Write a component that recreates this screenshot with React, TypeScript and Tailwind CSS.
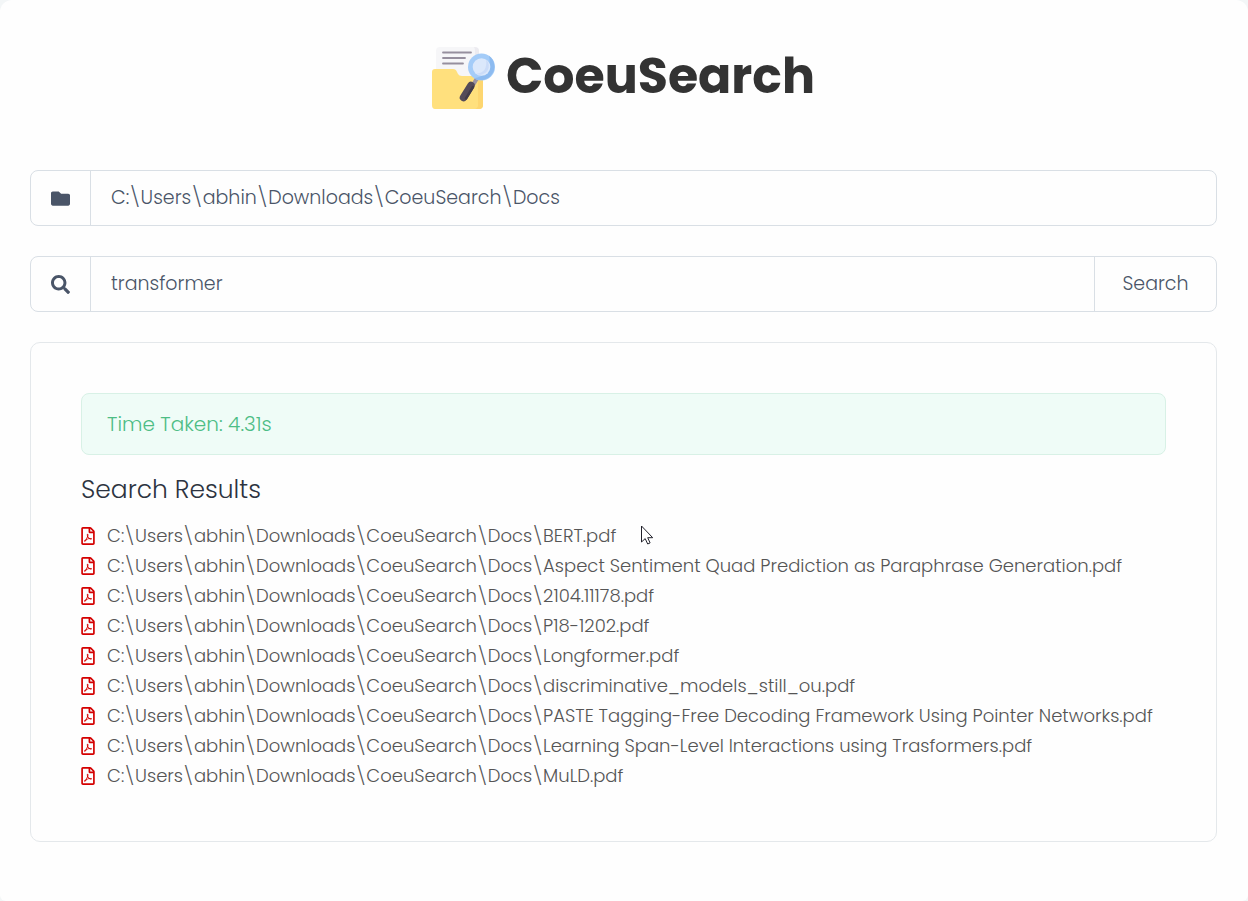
import { useState } from "react";
import { FaFolder, FaRegFilePdf, FaSearch } from "react-icons/fa";

const ROOT = "C:\\Users\\abhin\\Downloads\\CoeuSearch\\Docs";

const FILES = [
  "BERT.pdf",
  "Aspect Sentiment Quad Prediction as Paraphrase Generation.pdf",
  "2104.11178.pdf",
  "P18-1202.pdf",
  "Longformer.pdf",
  "discriminative_models_still_ou.pdf",
  "PASTE Tagging-Free Decoding Framework Using Pointer Networks.pdf",
  "Learning Span-Level Interactions using Trasformers.pdf",
  "MuLD.pdf",
];

function Logo() {
  return (
    <svg className="h-16 w-16 shrink-0" viewBox="0 0 64 64" aria-hidden="true">
      <path d="M8 1h35q4 0 4 4v36H4V5q0-4 4-4z" fill="#f6f6f8" />
      <path d="M42 1q5 0 5 4v36h-4V5q0-3-1-4z" fill="#ecebf0" />
      <g stroke="#968f9e" strokeWidth="1.8" strokeLinecap="round">
        <path d="M11 6.500h28M11 12h22M11 17.500h20" />
      </g>
      <path d="M3 23h18q3 0 4 3l1 2q1 2 4 2h17q4 0 4 4v25q0 4-4 4H3q-3 0-3-4V26q0-3 3-3z" fill="#ffe07d" />
      <path d="M45 30h2q4 0 4 4v25q0 4-4 4h-4q3-1 3-4V34q0-3-1-4z" fill="#fdd670" />
      <path d="M39.500 37.500l4-6.500 3.500 2-4 6.500z" fill="#9c94a3" />
      <path d="M39 39.500L31.500 51.500" stroke="#544b58" strokeWidth="7.500" strokeLinecap="round" />
      <path d="M41 41L34 52.500" stroke="#423b48" strokeWidth="2.500" strokeLinecap="round" />
      <circle cx="49.500" cy="21" r="13.500" fill="#a4ccf8" />
      <path d="M57 9.800a13.500 13.500 0 0 1-15 22.400Q61 29 57 9.800z" fill="#8dbbf0" />
      <circle cx="49.500" cy="21" r="8.800" fill="#dbe8fb" />
      <path d="M54 13.500a8.800 8.800 0 0 1-10 14.300q12-1 10-14.300z" fill="#cbdcf8" />
    </svg>
  );
}

function Pointer() {
  return (
    <svg className="pointer-events-none absolute top-1 left-full ml-6 h-5 w-4" viewBox="0 0 16 20" aria-hidden="true">
      <path
        d="M1.500 1v16l3.700-3.400 2.500 5.400 2.400-1.100-2.400-5.200h5z"
        fill="#fff"
        stroke="#20202a"
        strokeWidth="1"
      />
    </svg>
  );
}

export default function App() {
  const [folder, setFolder] = useState(ROOT);
  const [query, setQuery] = useState("transformer");

  return (
    <div className="min-h-screen bg-[#f3f6f7] font-[Poppins,Inter,'Liberation_Sans',sans-serif]">
      <main className="min-h-screen rounded-t-xl rounded-b-md bg-[#fefefe] pr-[31px] pl-[30px] pt-[46px] pb-[59px]">
        <header className="flex h-16 items-center justify-center gap-[10px]">
          <Logo />
          <h1 className="pb-1 text-[49px] leading-[60px] font-bold text-[#333333]">CoeuSearch</h1>
        </header>

        <form className="mt-[60px] flex flex-col gap-[30px] text-[19px] text-[#4a5568]" onSubmit={(e) => e.preventDefault()}>
          <div className="flex h-14 overflow-hidden rounded-lg border border-[#d9dfe5]">
            <label htmlFor="folder" aria-label="Folder" className="flex w-[60px] shrink-0 items-center justify-center border-r border-[#d9dfe5]">
              <FaFolder className="size-[19px]" />
            </label>
            <input
              id="folder"
              className="min-w-0 flex-1 bg-transparent px-5 font-light outline-none"
              value={folder}
              onChange={(e) => setFolder(e.target.value)}
            />
          </div>
          <div className="flex h-14 overflow-hidden rounded-lg border border-[#d9dfe5]">
            <label htmlFor="query" aria-label="Query" className="flex w-[60px] shrink-0 items-center justify-center border-r border-[#d9dfe5]">
              <FaSearch className="size-[19px]" />
            </label>
            <input
              id="query"
              className="min-w-0 flex-1 bg-transparent px-5 font-light outline-none"
              value={query}
              onChange={(e) => setQuery(e.target.value)}
            />
            <button type="submit" className="w-[122px] shrink-0 border-l border-[#d9dfe5] font-light">
              Search
            </button>
          </div>
        </form>

        <section className="mt-[30px] rounded-[10px] border border-[#e4e8eb] p-[50px]">
          <p className="rounded-lg border border-[#d8f1e6] bg-[#effcf7] px-[25px] py-4 text-[20px] leading-7 text-[#4dbd85] font-light">
            Time Taken: 4.31s
          </p>
          <h2 className="mt-[18px] text-[25px] leading-[34px] font-light text-[#2d3340]">Search Results</h2>
          <ul className="mt-[14px] text-[18px] leading-[30px] font-light text-[#555555]">
            {FILES.map((file, i) => (
              <li key={file} className="flex items-center gap-3">
                <FaRegFilePdf className="h-[18px] w-[14px] shrink-0 text-[#d40000]" />
                <span className="relative whitespace-nowrap">
                  {ROOT}\{file}
                  {i === 0 && <Pointer />}
                </span>
              </li>
            ))}
          </ul>
        </section>
      </main>
    </div>
  );
}
